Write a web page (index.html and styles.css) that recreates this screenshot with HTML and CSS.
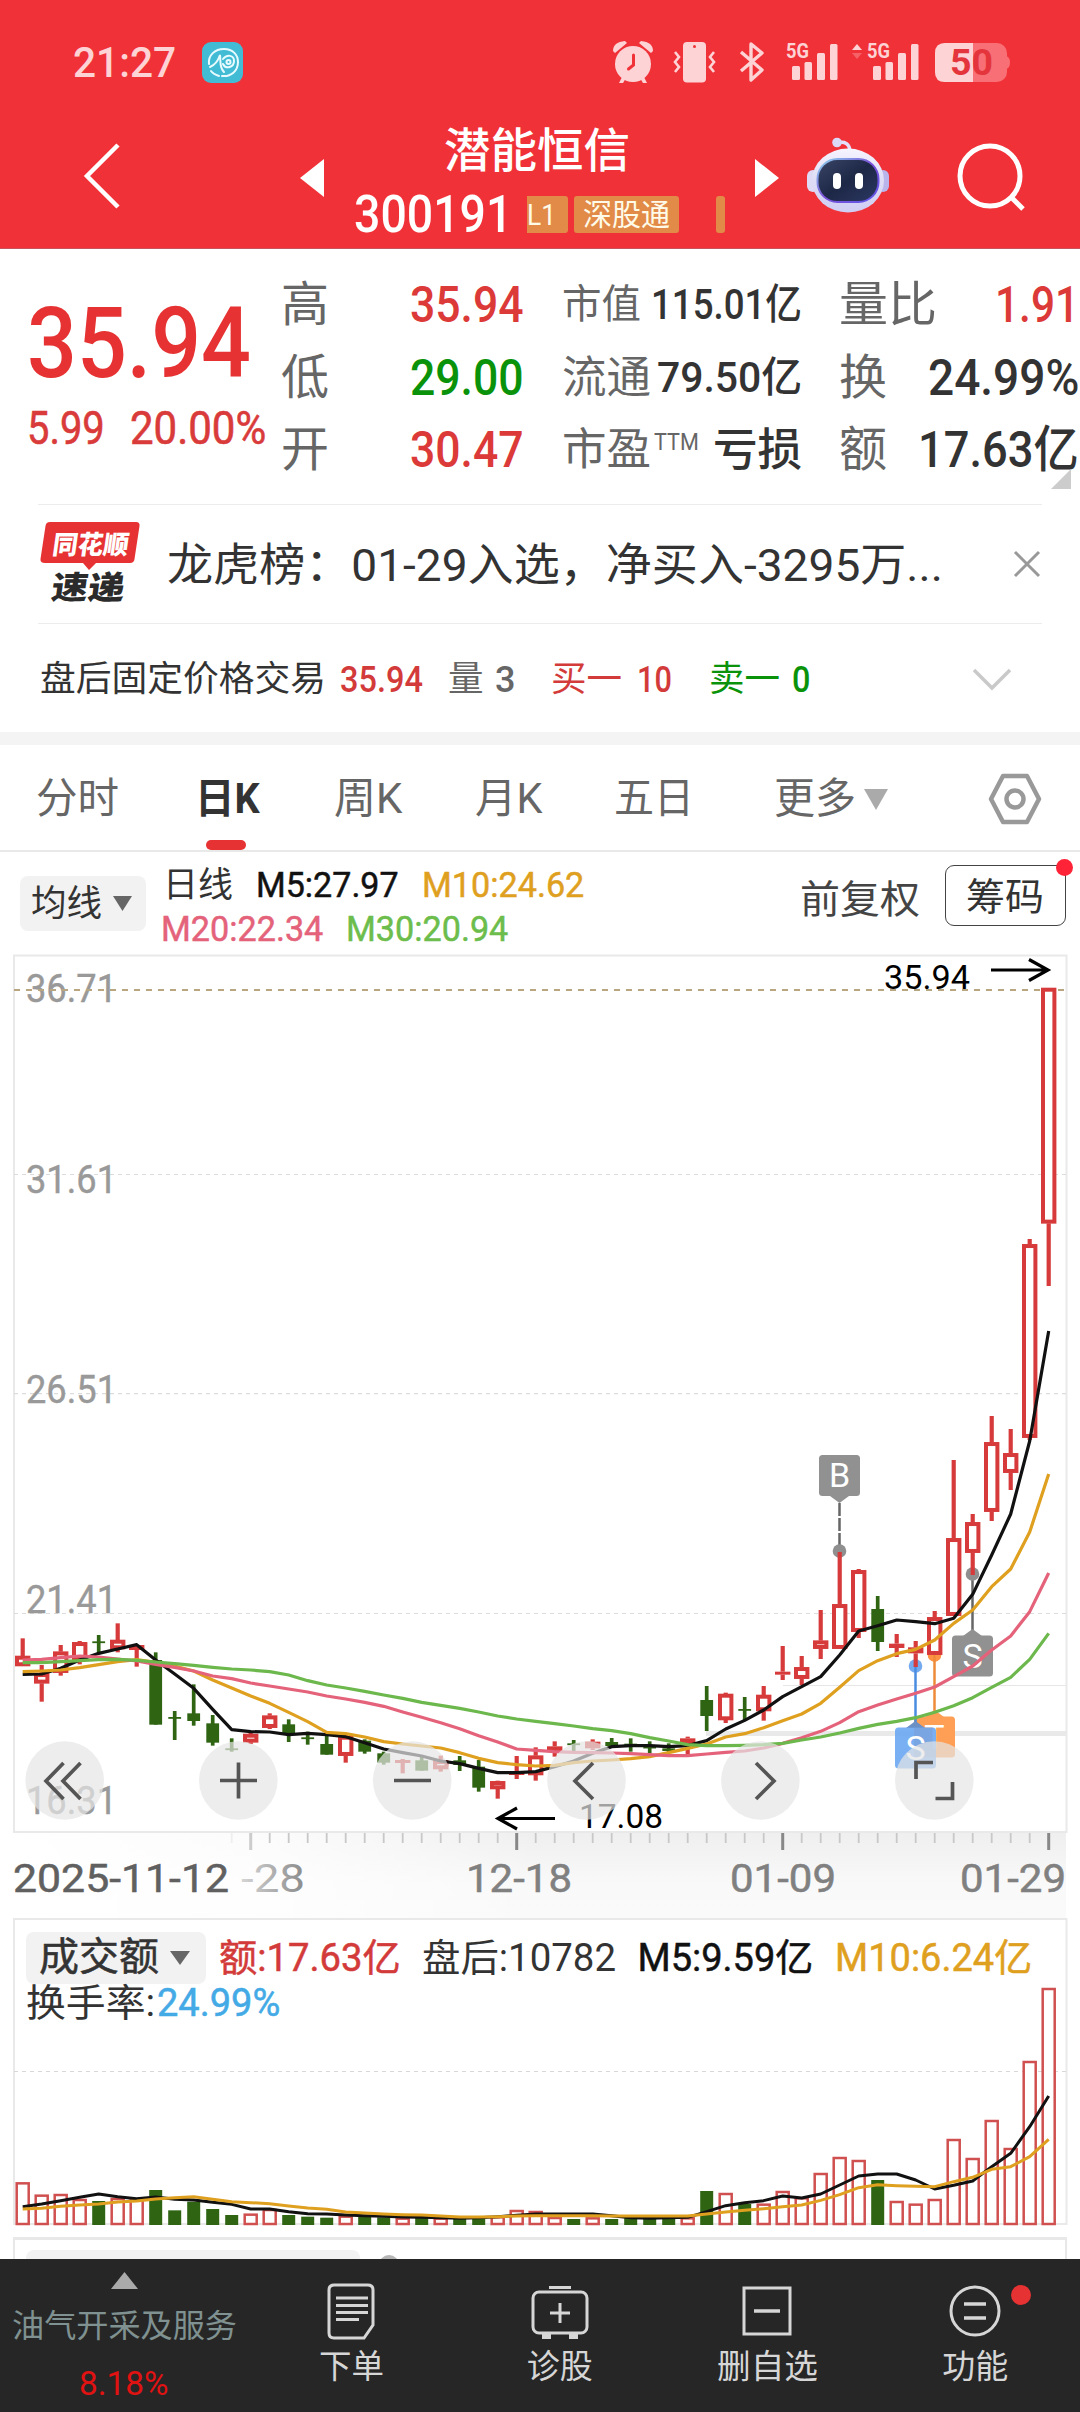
FILE: index.html
```html
<!DOCTYPE html>
<html lang="zh-CN">
<head>
<meta charset="utf-8">
<title>潜能恒信 300191</title>
<link rel="stylesheet" href="styles.css">
</head>
<body>
<div class="app">
  <header class="top">
    <div class="status">
      <span class="clock" data-w="103">21:27</span>
      <svg class="app-badge" width="41" height="41" viewBox="0 0 41 41">
        <rect width="41" height="41" rx="9" fill="#42bbd4"/>
        <g fill="none" stroke="#e8fbff" stroke-width="2" stroke-linecap="round">
          <path d="M7 22C6 13 13 7 22 7c9 0 14 6 14 13 0 9-7 15-16 14"/>
          <path d="M8 25c5-2 8-6 10-12 1 7-1 12 4 17"/>
          <path d="M21 17c4-5 11-4 11 2s-8 9-11 3"/>
          <circle cx="26.500" cy="20" r="2"/>
          <path d="M9 29c2 3 5 4 8 5"/>
        </g>
      </svg>
      <svg class="status-icons" width="420" height="60" viewBox="600 32 420 60" fill="#fdd3d5">
        <circle cx="633" cy="64" r="18"/>
        <path d="M613 51q0-9 12-10l2 2-12 10zM653 51q0-9-12-10l-2 2 12 10zM622 77l-3 6h4l3-5zM644 77l3 6h-4l-3-5z"/>
        <path d="M633.500 55v10l-5 4" fill="none" stroke="#f13138" stroke-width="3" stroke-linecap="round"/>
        <rect x="683" y="42" width="23" height="40.500" rx="4"/>
        <circle cx="694.500" cy="46.500" r="1.500" fill="#f13138"/>
        <path d="M675 52l4 5-4 5 4 5-4 5M714 52l-4 5 4 5-4 5 4 5" fill="none" stroke="#fdd3d5" stroke-width="2.600"/>
        <path d="M741 52l21 18-11 10V44l11 9-21 18" fill="none" stroke="#fdd3d5" stroke-width="3.400" stroke-linejoin="round"/>
        <text x="786" y="58" class="net" textLength="23" lengthAdjust="spacingAndGlyphs">5G</text>
        <rect x="792" y="66" width="8" height="14" rx="1.500"/><rect x="804.500" y="62" width="7.500" height="18" rx="1.500"/><rect x="817" y="53" width="8" height="27" rx="1.500"/><rect x="830" y="44" width="7.500" height="36" rx="1.500"/>
        <path d="M852 50l5-6 5 6z"/><path d="M852 53l5 6 5-6z" opacity=".3"/>
        <text x="867" y="58" class="net" textLength="23" lengthAdjust="spacingAndGlyphs">5G</text>
        <rect x="873" y="66" width="8" height="14" rx="1.500"/><rect x="885.500" y="62" width="7.500" height="18" rx="1.500"/><rect x="898" y="53" width="8" height="27" rx="1.500"/><rect x="911" y="44" width="7.500" height="36" rx="1.500"/>
        <rect x="935" y="43" width="72" height="39" rx="10" fill="#f86f75"/>
        <path d="M1006 56q4 1 4 6.500t-4 6.500z" fill="#f86f75"/>
        <path d="M945 43h28v39h-28q-10 0-10-10V53q0-10 10-10z"/>
        <text x="950" y="74.500" class="charge" textLength="43" lengthAdjust="spacingAndGlyphs">50</text>
      </svg>
    </div>
    <nav class="nav">
      <svg class="back" width="44" height="68" viewBox="0 0 44 68" fill="none" stroke="#fff" stroke-width="4.500"><path d="M37 3L6 34l31 31"/></svg>
      <svg class="prev" width="24" height="38" viewBox="0 0 24 38" fill="#fff"><path d="M24 0v38L0 19z"/></svg>
      <div class="title">
        <div class="name" data-w="186">潜能恒信</div>
        <div class="code">
          <span class="num" data-w="158">300191</span>
          <span class="tag tag-l1"><span data-w="29">L1</span></span><span class="tag tag-sgt"><span data-w="87">深股通</span></span><span class="tag tag-cut"></span>
        </div>
      </div>
      <svg class="next" width="24" height="38" viewBox="0 0 24 38" fill="#fff"><path d="M0 0v38l24-19z"/></svg>
      <svg class="robot" width="82" height="76" viewBox="0 0 82 76">
        <defs>
          <linearGradient id="shell" x1="0" y1="0" x2="0" y2="1"><stop offset="0" stop-color="#f6f4ff"/><stop offset=".5" stop-color="#dedcf5"/><stop offset="1" stop-color="#cfcdf3"/></linearGradient>
          <linearGradient id="visor" x1="0" y1="0" x2="1" y2="1"><stop offset="0" stop-color="#3b4668"/><stop offset=".5" stop-color="#1d2746"/><stop offset="1" stop-color="#2c3863"/></linearGradient>
          <linearGradient id="rim" x1="0" y1="0" x2="1" y2="1"><stop offset="0" stop-color="#8fd9ee"/><stop offset=".5" stop-color="#7a4fd8"/><stop offset="1" stop-color="#5f56e8"/></linearGradient>
        </defs>
        <path d="M30 6q12-3 13 8" fill="none" stroke="#e4e0fb" stroke-width="3.500"/>
        <circle cx="30" cy="5.500" r="4.800" fill="#dcd8f8"/>
        <rect x="0" y="33" width="12" height="22" rx="6" fill="#dedaf6"/><rect x="70" y="33" width="12" height="22" rx="6" fill="#b9b4ea"/>
        <ellipse cx="41" cy="43.500" rx="36" ry="32" fill="url(#shell)"/>
        <rect x="10.500" y="22" width="61" height="43" rx="20" fill="url(#visor)" stroke="url(#rim)" stroke-width="2"/>
        <rect x="26" y="36" width="8" height="16" rx="4" fill="#fff"/><rect x="48" y="36" width="8" height="16" rx="4" fill="#fff"/>
      </svg>
      <svg class="search" width="70" height="70" viewBox="0 0 70 70" fill="none" stroke="#fff" stroke-width="5"><circle cx="33" cy="33" r="30"/><path d="M54 54l12 12"/></svg>
    </nav>
  </header>

  <section class="quote">
    <div class="price">
      <div class="last" data-w="224">35.94</div>
      <div class="change"><span data-w="78">5.99</span><span data-w="136">20.00%</span></div>
    </div>
    <div class="stats">
      <div class="cell"><span class="k">高</span><span class="v red" data-w="114">35.94</span></div>
      <div class="cell"><span class="k k-s" data-w="79">市值</span><span class="v v-s" data-w="151">115.01亿</span></div>
      <div class="cell"><span class="k" data-w="98">量比</span><span class="v red" data-w="84">1.91</span></div>
      <div class="cell"><span class="k">低</span><span class="v green" data-w="114">29.00</span></div>
      <div class="cell"><span class="k k-m" data-w="89">流通</span><span class="v v-m" data-w="145">79.50亿</span></div>
      <div class="cell"><span class="k">换</span><span class="v" data-w="151">24.99%</span></div>
      <div class="cell"><span class="k">开</span><span class="v red" data-w="114">30.47</span></div>
      <div class="cell"><span class="k k-m"><span data-w="89">市盈</span><sup data-w="45">TTM</sup></span><span class="v v-cn" data-w="89">亏损</span></div>
      <div class="cell"><span class="k">额</span><span class="v" data-w="161">17.63亿</span></div>
    </div>
    <svg class="corner" width="20" height="20" viewBox="0 0 20 20"><path d="M20 0v20H0z" fill="#ccc"/></svg>
  </section>

  <section class="news">
    <svg class="logo" width="100" height="84" viewBox="0 0 100 84">
      <path d="M10 0h86q4 0 3.500 4l-5 33q-.5 4-4.500 4H56l-7 7-6-7H5q-5 0-4.500-4l5-33Q6 0 10 0z" fill="#e63232"/>
      <g class="logo-text" transform="skewX(-8)">
        <text x="16" y="32" fill="#fff" font-size="26" textLength="76" lengthAdjust="spacingAndGlyphs">同花顺</text>
        <text x="21" y="77" fill="#2b2b2b" font-size="32" textLength="73" lengthAdjust="spacingAndGlyphs">速递</text>
      </g>
    </svg>
    <span class="headline" data-w="776">龙虎榜：01-29入选，净买入-3295万...</span>
    <svg class="close" width="28" height="28" viewBox="0 0 28 28" stroke="#999" stroke-width="3"><path d="M2 2l24 24M26 2L2 26"/></svg>
  </section>

  <section class="after">
    <span class="dark" data-w="286">盘后固定价格交易</span><b class="red2" data-w="83">35.94</b><span class="gray">量</span><b class="gray num3">3</b><span class="red2">买一</span><b class="red2" data-w="35">10</b><span class="green">卖一</span><b class="green" data-w="18">0</b>
    <svg width="40" height="24" viewBox="0 0 40 24" fill="none" stroke="#c9c9c9" stroke-width="3.500"><path d="M2 2l18 18L38 2"/></svg>
  </section>

  <nav class="tabs">
    <span data-w="83">分时</span><span class="active"><span data-w="65">日K</span></span><span data-w="68">周K</span><span data-w="67">月K</span><span data-w="80">五日</span><span data-w="82">更多</span>
    <svg class="more" width="26" height="21" viewBox="0 0 26 21"><path d="M1 0h24L13 21z" fill="#aaa"/></svg>
    <svg class="gear" width="54" height="52" viewBox="0 0 54 52" fill="none" stroke="#999" stroke-width="4.500" stroke-linejoin="round"><path d="M15 3h24l12 23-12 23H15L3 26z"/><circle cx="27" cy="26" r="8.500"/></svg>
  </nav>

  <section class="ma">
    <button class="pick"><span data-w="71">均线</span><svg width="19" height="15" viewBox="0 0 19 15"><path d="M0 0h19L9.500 15z" fill="#666"/></svg></button>
    <div class="ma-values">
      <div><span class="dark" data-w="70">日线</span><span class="c5" data-w="143">M5:27.97</span><span class="c10" data-w="162">M10:24.62</span></div>
      <div><span class="c20" data-w="162">M20:22.34</span><span class="c30" data-w="162">M30:20.94</span></div>
    </div>
    <span class="adjust" data-w="120">前复权</span>
    <button class="chips"><span data-w="78">筹码</span><i></i></button>
  </section>

  <svg class="kline" id="kline" width="1080" height="964" viewBox="0 954 1080 964"></svg>

  <section class="volume">
    <svg id="volume" width="1080" height="308" viewBox="0 1918 1080 308"></svg>
    <div class="vol-head">
      <div><button class="pick vol-pick"><span data-w="120">成交额</span><svg width="20" height="14" viewBox="0 0 20 14"><path d="M0 0h20L10 14z" fill="#666"/></svg></button><span class="red2" data-w="182">额:17.63亿</span><span class="dark" data-w="194">盘后:10782</span><span class="c5" data-w="176">M5:9.59亿</span><span class="c10" data-w="197">M10:6.24亿</span></div>
      <div class="turn"><span class="dark" data-w="129">换手率:</span><span class="blue" data-w="123">24.99%</span></div>
    </div>
  </section>

  <section class="peek"><div class="peek-frame"><i class="peek-pick"></i><i class="peek-dot"></i></div></section>

  <footer class="bar">
    <div class="sector">
      <svg width="27" height="17" viewBox="0 0 27 17"><path d="M13.500 0L27 17H0z" fill="#aaa"/></svg>
      <span class="sector-name" data-w="225">油气开采及服务</span>
      <span class="sector-pct" data-w="90">8.18%</span>
    </div>
    <div class="act">
      <svg width="60" height="60" viewBox="0 0 60 60"><path d="M12 4h34q5 0 5 5v35L42 57H12q-5 0-5-5V9q0-5 5-5z"/><path d="M14 17h32M14 24.500h32M14 31.500h32M14 38.500h23"/></svg>
      <span data-w="65">下单</span>
    </div>
    <div class="act">
      <svg width="60" height="60" viewBox="0 0 60 60"><rect x="3" y="11" width="54" height="41" rx="6"/><path d="M19 6.500h22M30 22v20M20 32h20"/><path d="M12 55.500h9M39 55.500h9" stroke-width="5"/></svg>
      <span data-w="66">诊股</span>
    </div>
    <div class="act">
      <svg width="60" height="60" viewBox="0 0 60 60"><path d="M7 7h46v46H7z"/><path d="M17 30h26" stroke-width="3.500"/></svg>
      <span data-w="101">删自选</span>
    </div>
    <div class="act">
      <svg width="60" height="60" viewBox="0 0 60 60"><circle cx="30" cy="30" r="24"/><path d="M19 23h22M19 37h22" stroke-width="3.500"/></svg>
      <span data-w="66">功能</span>
      <i></i>
    </div>
  </footer>
</div>
<script src="main.js"></script>
</body>
</html>
```
FILE: styles.css
```css
* { box-sizing: border-box; }
body { margin: 0; background: #fff; }
.app {
  width: 1080px; height: 2412px; overflow: hidden; background: #fff;
  font-family: Roboto, "Noto Sans CJK SC", sans-serif; line-height: 1; color: #333; white-space: nowrap;
}
svg { display: block; flex: none; }
button { font: inherit; color: inherit; border: 0; margin: 0; }
[data-w] { display: inline-block; transform-origin: 0 50%; flex: none; justify-self: start; }

.red { color: #dc3939; }
.red2 { color: #d33a3a; }
.green { color: #0a930a; }
.gray { color: #666; }
.dark { color: #333; }
.blue { color: #44aae6; }
.c5 { color: #111; }
.c10 { color: #dfa01f; }
.c20 { color: #e4627a; }
.c30 { color: #6cbd4c; }

/* header */
.top { height: 249px; background: #f13138; border-bottom: 1px solid #c9535c; color: #fff; }
.status { display: flex; align-items: center; height: 124px; padding-left: 73px; color: #fdd3d5; }
.clock { font-size: 43px; font-weight: 500; }
.app-badge { margin-left: 26px; }
.status-icons { margin-left: 357px; }
.net { font-size: 21px; font-weight: 700; }
.charge { font-size: 36px; font-weight: 700; fill: #e5353c; }
.nav { display: flex; align-items: flex-start; height: 124px; padding-left: 81px; }
.back { margin-top: 18px; }
.prev { margin: 35px 0 0 175px; }
.title { width: 431px; padding-left: 30px; }
.name { margin: 4px 0 0 90px; font-size: 47px; line-height: 46px; font-weight: 500; }
.code { display: flex; align-items: center; height: 41px; margin-top: 20px; }
.code .num { font-size: 52px; font-weight: 500; }
.tag { display: flex; align-items: center; height: 37px; margin-left: 6px; background: #e28b49; border-radius: 3px; font-size: 30px; color: #fffbe8; }
.tag-l1 { width: 41px; margin-left: 15px; border-radius: 0 3px 3px 0; }
.tag-sgt { width: 105px; padding-left: 9px; }
.tag-cut { width: 9px; margin-left: 37px; }
.next { margin-top: 35px; }
.robot { margin: 13px 0 0 28px; }
.search { margin: 19px 0 0 68px; }

/* quote */
.quote { position: relative; display: flex; height: 255px; }
.price { width: 281px; padding: 46px 0 0 27px; }
.last { font-size: 98px; font-weight: 500; color: #e63232; }
.change { display: flex; justify-content: space-between; width: 239px; margin-top: 12px; font-size: 46px; color: #d93a3a; -webkit-text-stroke: .6px #d93a3a; }
.stats { display: grid; grid-template-columns: 243px 240px 240px; grid-auto-rows: 72.500px; column-gap: 37.500px; padding-top: 20px; }
.cell { display: flex; align-items: center; justify-content: space-between; }
.k { font-size: 48px; color: #666; }
.k-s { font-size: 40px; }
.k-m { font-size: 44px; }
.v { font-size: 50px; font-weight: 500; }
.v-s, .v-m { font-size: 42px; }
.v-cn { font-size: 45px; }
.k sup { font-size: 24px; margin-left: 3px; vertical-align: 15px; line-height: 0; }
.corner { position: absolute; left: 1051px; bottom: 15px; }

.news, .after { display: flex; align-items: center; margin: 0 38px; padding: 0 2px; border-top: 1.500px solid #ececec; }
.news { height: 119px; }
.logo-text { font-weight: 900; stroke-width: .8px; paint-order: stroke; }
.headline { margin-left: 27px; font-size: 45px; padding-top: 3px; }
.close { margin-left: auto; margin-right: -1px; }
.after { display: grid; grid-template-columns: 300px 108px 47px 56px 86px 72px 83px 180px 40px; height: 109px; font-size: 35.500px; padding-top: 4px; }
.after b { font-weight: 500; font-size: 36px; }

/* tabs */
.tabs { position: relative; display: grid; grid-template-columns: 161px 137px 141px 139px 160px 89px 122px 60px; align-items: center; height: 120px; padding: 3px 0 0 36px; border-top: 13px solid #f4f4f4; border-bottom: 2px solid #e9e9e9; font-size: 42px; color: #666; }
.active { position: relative; left: -2px; color: #333; font-weight: 700; }
.active::after { content: ""; position: absolute; left: 11px; top: 62px; width: 40px; height: 10px; border-radius: 5px; background: #e63232; }
.gear { margin-left: 3px; }

/* moving averages */
.ma { display: flex; align-items: flex-start; height: 102px; padding-left: 20px; }
.pick { display: flex; align-items: center; width: 126px; height: 55px; margin-top: 24px; padding: 0 0 0 11px; border-radius: 8px; background: #f2f2f2; font-size: 36px; color: #333; }
.pick svg { margin-left: 11px; }
.ma-values { width: 640px; padding: 11px 0 0 15px; font-size: 35px; }
.ma-values div { display: flex; align-items: center; height: 44.500px; gap: 23px; }
.ma-values div:first-child { padding-left: 2px; }
.ma-values span:not(.dark), .vol-head span:not(.dark) { -webkit-text-stroke: .5px; }
.adjust { margin: 29px 0 0 14px; font-size: 39px; color: #444; }
.chips { position: relative; display: flex; align-items: center; width: 121px; height: 61px; margin: 13px 0 0 25px; padding: 3px 0 0 20px; border: 1.500px solid #444; border-radius: 9px; background: #fff; font-size: 38px; color: #333; }
.chips i { position: absolute; right: -8px; top: -7px; width: 17px; height: 17px; border-radius: 50%; background: #ff2338; }

/* charts */
.kline text { font-family: Roboto, "Noto Sans CJK SC", sans-serif; }
.y-label { font-size: 38px; fill: #999; stroke: #999; stroke-width: .4px; }
.x-label { font-size: 39px; }
.callout { font-size: 33px; fill: #000; }
.flag { font-size: 34px; fill: #fff; }
.volume { position: relative; height: 308px; }
.vol-head { position: absolute; left: 26px; top: 13px; font-size: 38px; }
.vol-head > div { display: flex; align-items: center; height: 52px; padding-top: 1px; gap: 21.500px; }
.vol-head .pick { width: 180px; height: 52px; margin: 0 -9px 0 0; padding-left: 13px; font-size: 39px; }
.vol-head .turn { height: 39px; gap: 2px; }

.peek { height: 33px; padding: 11px 13px 0; }
.peek-frame { position: relative; height: 22px; border: solid #e8e8e8; border-width: 3px 2px 0; overflow: hidden; }
.peek-pick { display: block; width: 334px; height: 40px; margin: 10px 0 0 11px; border-radius: 8px; background: #f2f2f2; }
.peek-dot { position: absolute; left: 364px; top: 15px; width: 20px; height: 20px; border-radius: 50%; background: #b5b5b5; }

/* bottom bar */
.bar { display: flex; height: 153px; background: #262626; color: #d6d6d6; }
.sector { display: flex; flex-direction: column; align-items: flex-start; width: 248px; padding: 13px 0 0 12px; }
.sector > svg { margin-left: 99px; }
.sector-name { margin-top: 21px; font-size: 32px; color: #7f9190; }
.sector-pct { margin: 25px 0 0 67px; font-size: 33px; color: #e01212; }
.act { position: relative; display: flex; flex-direction: column; align-items: center; width: 207.750px; padding-top: 22px; font-size: 33px; }
.act svg { fill: none; stroke: #d6d6d6; stroke-width: 3; }
.act span { margin-top: 9px; }
.act i { position: absolute; left: 140px; top: 26px; width: 20px; height: 20px; border-radius: 50%; background: #e63232; }
```
FILE: main.js
```js
// Condense each label to its column width, keeping it in flow.
document.querySelectorAll('[data-w]').forEach(function (el) {
  var natural = el.offsetWidth, w = +el.dataset.w;
  el.style.width = natural + 'px';
  el.style.transform = 'scaleX(' + w / natural + ')';
  el.style.marginRight = (w - natural) + 'px';
});

var X = function (i) { return 22.7 + 19 * i; };
var RED = '#d63a3a', GREEN = '#2f6413';
var Y = function (v) { return 1580 + v / 3; };

// [direction, high, body top, body bottom, low], thirds of a pixel below y=1580
var days = [
  ['r',175,228,258,258],['r',255,280,310,365],['r',195,215,278,287],['r',183,187,240,253],['g',165,184,188,222],
  ['r',130,180,207,217],['r',195,195,210,260],['g',217,240,434,434],['g',393,411,416,480],['g',313,400,423,437],
  ['g',405,430,488,497],['g',475,505,509,515],['r',455,462,487,492],['r',400,407,443,447],['g',418,433,460,486],
  ['g',455,472,476,494],['g',465,492,524,524],['r',465,468,527,548],['g',478,482,515,521],['g',515,520,548,554],
  ['r',537,540,549,580],['g',530,541,572,572],['r',527,541,567,575],['g',528,541,555,573],['g',540,560,623,635],
  ['r',602,604,627,656],['r',528,573,585,597],['r',502,527,585,602],['r',484,499,515,530],['g',480,490,495,515],
  ['r',478,485,505,510],['g',474,486,498,502],['g',475,491,495,515],['g',484,500,505,521],['g',490,505,513,517],
  ['r',470,475,495,522],['g',318,360,408,453],['r',338,342,420,429],['g',351,387,392,420],['r',318,345,393,422],
  ['r',198,275,284,300],['r',228,262,296,315],['r',90,182,206,237],['r',-84,73,206,206],['r',-33,-29,155,174],
  ['g',48,87,186,213],['r',162,191,204,231],['r',183,202,220,261],['r',93,112,224,225],['r',-360,-125,107,108],
  ['r',-198,-173,-82,-15],['r',-492,-413,-205,-177],['r',-453,-380,-322,-270],['r',-1023,-1007,-427,-420],['r',-1776,-1776,-1070,-882]
];
var ma5 = [283,282,265,240,220,207,194,240,282,325,388,449,455,456,464,460,464,470,488,507,518,528,543,551,565,578,578,575,560,543,520,500,497,497,500,497,482,447,421,390,350,320,290,225,153,137,120,125,131,115,43,-75,-198,-417,-747];
var ma10 = [275,273,270,263,254,245,239,247,258,273,300,324,348,370,397,425,457,461,471,485,492,498,504,518,535,548,554,558,556,548,543,540,536,530,518,505,492,471,461,443,422,402,370,322,272,242,221,208,180,130,90,20,-33,-144,-318];
var ma20 = [240,238,233,228,231,237,243,253,262,273,288,296,309,318,327,336,348,357,367,379,396,412,428,446,467,486,507,511,515,517,518,519,521,524,527,527,522,517,513,504,490,473,454,428,395,375,357,340,321,290,258,210,168,95,-21];
var ma30 = [248,248,245,242,239,238,241,246,251,256,262,267,270,275,285,302,315,324,334,345,355,367,376,385,396,408,417,424,431,438,446,452,461,473,483,494,497,497,496,494,490,480,471,459,445,433,424,413,397,377,353,322,292,238,160];

function rect(x, y, w, h, attrs) { return '<rect x="' + x + '" y="' + y + '" width="' + w + '" height="' + h + '" ' + attrs + '/>'; }
function line(x1, y1, x2, y2, color, w, extra) { return '<path d="M' + x1 + ' ' + y1 + 'L' + x2 + ' ' + y2 + '" fill="none" stroke="' + color + '" stroke-width="' + w + '" ' + (extra || '') + '/>'; }
function path(d, color, w) { return '<path d="' + d + '" fill="none" stroke="' + color + '" stroke-width="' + w + '"/>'; }
function curve(vals, base, color, w) {
  return '<polyline fill="none" stroke-linejoin="round" stroke="' + color + '" stroke-width="' + w + '" points="' +
    vals.map(function (v, i) { return X(i) + ',' + (base + v / 3); }).join(' ') + '"/>';
}
function label(x, y, w, cls, s, extra) { return '<text x="' + x + '" y="' + y + '" class="' + cls + '" textLength="' + w + '" lengthAdjust="spacingAndGlyphs" ' + (extra || '') + '>' + s + '</text>'; }

var k = '<defs><linearGradient id="fx" x1="0" x2="1" y1="0" y2="0"><stop offset="0" stop-color="#fff"/><stop offset=".25" stop-color="#fff" stop-opacity=".75"/><stop offset=".5" stop-color="#fff" stop-opacity="0"/></linearGradient>' +
  '<linearGradient id="fy" x1="0" x2="0" y1="0" y2="1"><stop offset="0" stop-color="#efefef"/><stop offset=".6" stop-color="#f9f9f9"/><stop offset="1" stop-color="#fafafa"/></linearGradient>' +
  '<linearGradient id="lb" gradientUnits="userSpaceOnUse" x1="225" x2="310" y1="0" y2="0"><stop offset="0" stop-color="#e8e8e8"/><stop offset="1" stop-color="#858585"/></linearGradient></defs>';
k += rect(14, 1833, 1052, 85, 'fill="url(#fy)"') + rect(14, 1833, 1052, 85, 'fill="url(#fx)"');
k += rect(14, 955.5, 1052.5, 876.5, 'fill="#fff" stroke="#e9e9e9" stroke-width="2"');
[1174.5, 1393.7, 1613.5].forEach(function (y) { k += line(14, y, 1066, y, '#dcdcdc', 1.2, 'stroke-dasharray="4 4"'); });
k += line(783, 1685.5, 1066, 1685.5, '#e6e6e6', 1.2) + line(706, 1733.5, 1066, 1733.5, '#e9e9e9', 5);
[['36.71',1002],['31.61',1193],['26.51',1403],['21.41',1613],['16.31',1814]].forEach(function (a) { k += label(26, a[1], 91, 'y-label', a[0]); });
k += line(14, 990, 1064, 990, '#b8a680', 2, 'stroke-dasharray="6 6"');

// trade markers
function flag(x, y, color, s, op) {
  return rect(x - 20.5, y, 41, 41, 'rx="3.5" fill="' + color + '" opacity="' + op + '"') + '<text x="' + x + '" y="' + (y + 32) + '" text-anchor="middle" class="flag">' + s + '</text>';
}
k += line(839.5, 1503, 839.5, 1551, '#666', 2.5, 'stroke-dasharray="13 2"') + '<circle cx="839.5" cy="1551" r="6.8" fill="#8f8f8f"/><path d="M830 1496h19l-9.500 7z" fill="#919191"/>' + flag(839.5, 1455, '#919191', 'B', 1);
k += line(972.5, 1574, 972.5, 1631, '#666', 2.5) + '<circle cx="972.500" cy="1574" r="6.800" fill="#8f8f8f"/><path d="M963 1636h19l-9.500-7z" fill="#919191"/>' + flag(972.5, 1635.5, '#919191', 'S', 1);
k += '<circle cx="934.500" cy="1655" r="6.800" fill="#ff9344"/>' + line(934.5, 1655, 934.5, 1713, '#ee8b3a', 2.5) + '<path d="M925 1717h19l-9.500-7z" fill="#ff9f55"/>' + flag(934.5, 1716.5, '#ff9f55', 'T', 1);
k += '<circle cx="915.500" cy="1666" r="6.800" fill="#76aaee"/>' + line(915.5, 1666, 915.5, 1722, '#4a8de0', 2.5) + '<path d="M906 1728h19l-9.500-7z" fill="#6c8fc4"/>' + flag(915.5, 1727.5, '#6aa6f2', 'S', .9);

days.forEach(function (d, i) {
  var x = X(i), hi = Y(d[1]), t = Y(d[2]), b = Y(d[3]), lo = Y(d[4]);
  if (d[0] === 'g') {
    k += line(x, hi, x, lo, GREEN, 3.7) + rect(x - 6.4, t, 12.8, Math.max(b - t, 1.8), 'fill="' + GREEN + '"');
  } else {
    if (hi < t) k += line(x, hi, x, t, RED, 4.2);
    if (lo > b) k += line(x, b, x, lo, RED, 4.2);
    k += b - t < 7 ? rect(x - 7.7, t, 15.4, Math.max(b - t, 3), 'fill="' + RED + '"')
      : rect(x - 5.7, t + 1.7, 11.4, b - t - 3.4, 'fill="#fff" stroke="' + RED + '" stroke-width="4"');
  }
});
k += curve(ma5, 1580, '#111', 3.2) + curve(ma10, 1580, '#dfa01f', 3.2) + curve(ma20, 1580, '#e4627a', 3.2) + curve(ma30, 1580, '#6cb84c', 3.2);

k += label(884, 989, 86, 'callout', '35.94') + path('M991 970H1048M1029 959.500L1048 970L1029 980.500', '#000', 3.2);
k += label(579, 1828, 84, 'callout', '17.08') + path('M555 1818.500H498M517 1808L498 1818.500L517 1829', '#000', 3.2);

// floating chart controls
[[64.7, 'M63.500 1763L46 1781l17.500 18M80.500 1763L63 1781l17.500 18'], [238.3, 'M220 1780.500h37M238.500 1762.500v36'], [412.2, 'M394 1780.500h37'],
 [586.5, 'M593 1763L575 1781l18 18'], [760.4, 'M756 1763l18 18-18 18'], [934.3, 'M916 1779v-16.500h17M952.500 1782v16.500h-17']].forEach(function (c) {
  k += '<circle cx="' + c[0] + '" cy="1780.500" r="39.300" fill="#e5e5e5" opacity=".7"/>' + path(c[1], '#555', 3.7);
});

// time axis
for (var i = 11; i < 55; i++) {
  var major = (i - 12) % 14 === 0;
  k += line(X(i), 1833, X(i), major ? 1850 : 1843, major ? (i === 12 ? '#ccc' : '#888') : (i === 11 ? '#eee' : '#c8c8c8'), major ? 3 : 1.8);
}
k += label(241, 1892, 64, 'x-label', '-28', 'fill="url(#lb)"') + label(13, 1892, 216, 'x-label', '2025-11-12', 'fill="#606060" stroke="#606060" stroke-width=".5"');
[['12-18', 466], ['01-09', 730], ['01-29', 960]].forEach(function (a) { k += label(a[1], 1892, 106, 'x-label', a[0], 'fill="#808080" stroke="#808080" stroke-width=".5"'); });
document.getElementById('kline').innerHTML = k;

// turnover bars, thirds of a pixel below y=1900
var vol = [850,887,885,900,903,897,900,870,931,905,927,945,944,930,945,950,953,950,950,952,956,954,956,956,955,952,933,936,954,957,955,957,954,955,957,955,873,882,912,914,876,895,822,774,783,840,906,914,900,720,777,663,747,486,267];
var volUp = '1111011000001100010010100111010000010101111110111111111';
volUp = '1111011' + '00000' + '11' + '000' + '1' + '00' + '1' + '0' + '1' + '00' + '111' + '0' + '1' + '0000' + '1' + '0' + '1' + '0' + '111111' + '0' + '111111111';
volUp = vol.map(function (v, i) { return [4,7,8,9,10,11,14,15,16,18,19,21,23,24,29,31,32,33,34,36,38,45].indexOf(i) < 0; });
var v5 = [920,912,902,892,882,890,896,891,898,900,907,913,927,927,935,941,942,945,947,949,951,952,953,955,953,950,946,942,942,942,942,947,953,955,953,952,935,917,908,902,888,894,882,855,828,822,822,840,867,856,843,800,760,680,588];
var v10 = [927,925,919,915,912,906,903,897,893,890,898,905,908,911,918,924,928,936,939,942,944,945,948,951,951,950,948,947,947,947,947,948,948,948,948,948,942,936,931,926,920,915,901,884,863,854,857,859,860,845,832,808,800,770,718];
var s = rect(14, 1919, 1052.5, 305, 'fill="#fff" stroke="#e9e9e9" stroke-width="2"') + line(14, 2071.5, 1066, 2071.5, '#d8d8d8', 1.2, 'stroke-dasharray="4 4"');
vol.forEach(function (v, i) {
  var y = 1900 + v / 3;
  s += volUp[i] ? rect(X(i) - 6, y, 12, 2224 - y, 'fill="#fff" stroke="#d05050" stroke-width="2.500"') : rect(X(i) - 6.5, y, 13, 2225 - y, 'fill="' + GREEN + '"');
});
s += curve(v5, 1900, '#111', 3) + curve(v10, 1900, '#dfa01f', 3);
document.getElementById('volume').innerHTML = s;
```
